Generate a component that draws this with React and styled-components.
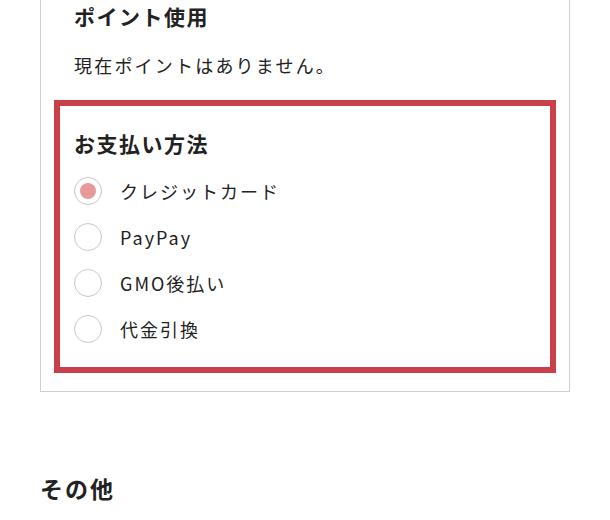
import React, { useState } from 'react';
import styled, { createGlobalStyle } from 'styled-components';

const GlobalStyle = createGlobalStyle`
  body {
    margin: 0;
    background: #ffffff;
    color: #222222;
    font-family: "Noto Sans CJK JP", "Noto Sans", sans-serif;
  }
`;

const methods = ['クレジットカード', 'PayPay', 'GMO後払い', '代金引換'];

const Page = styled.div`
  padding: 0 40px;
`;

const Box = styled.div`
  width: 502px;
  border: 1px solid #cfcfcf;
  border-top: none;
  padding: 1px 13px 18px;
`;

const PointSection = styled.div`
  padding: 0 20px;
`;

const Heading = styled.h3`
  margin: 0;
  font-size: 21px;
  line-height: 30px;
  font-weight: 700;
  letter-spacing: 1.5px;
`;

const Text = styled.p`
  margin: 20px 0 0;
  font-size: 18px;
  line-height: 28px;
  letter-spacing: 2.2px;
`;

const PaymentBox = styled.div`
  margin-top: 21px;
  border: 6px solid #c9404a;
  padding: 22px 14px 15px;
`;

const List = styled.div`
  margin-top: 10px;
  display: flex;
  flex-direction: column;
`;

const Row = styled.label`
  display: flex;
  align-items: center;
  gap: 18px;
  height: 46px;
  cursor: pointer;
`;

const Radio = styled.span`
  width: 28px;
  height: 28px;
  box-sizing: border-box;
  border-radius: 50%;
  border: 1.5px solid #c8c8c8;
  display: flex;
  align-items: center;
  justify-content: center;

  &::after {
    content: '';
    width: 16px;
    height: 16px;
    border-radius: 50%;
    background: ${(p) => (p.$checked ? '#e89a9b' : 'transparent')};
  }
`;

const Label = styled.span`
  font-size: 18px;
  line-height: 28px;
  letter-spacing: 2px;
`;

const Other = styled.h2`
  margin: 80px 0 0;
  font-size: 23px;
  line-height: 32px;
  font-weight: 700;
  letter-spacing: 2px;
`;

export default function App() {
  const [selected, setSelected] = useState(0);

  return (
    <>
      <GlobalStyle />
      <Page>
        <Box>
          <PointSection>
            <Heading>ポイント使用</Heading>
            <Text>現在ポイントはありません。</Text>
          </PointSection>
          <PaymentBox>
            <Heading>お支払い方法</Heading>
            <List>
              {methods.map((m, i) => (
                <Row key={m} onClick={() => setSelected(i)}>
                  <Radio $checked={selected === i} />
                  <Label>{m}</Label>
                </Row>
              ))}
            </List>
          </PaymentBox>
        </Box>
        <Other>その他</Other>
      </Page>
    </>
  );
}
